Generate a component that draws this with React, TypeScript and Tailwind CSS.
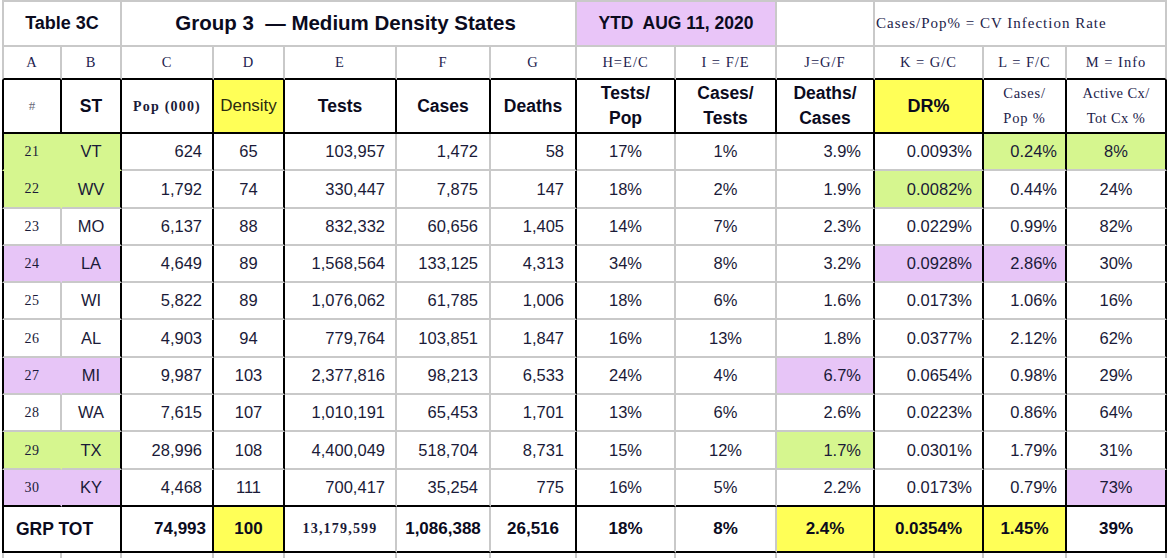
import React from "react";

// fill colours used in the sheet
const GREEN = { bg: "bg-[#d6f68f]", r: "border-r-[#d6f68f]", b: "border-b-[#d6f68f]" };
const PURPLE = { bg: "bg-[#e7c5f7]", r: "border-r-[#e7c5f7]", b: "border-b-[#e7c5f7]" };
type Fill = typeof GREEN;

const SERIF = "font-['Liberation_Serif','Times_New_Roman',serif]";

// column rules: black right border + alignment for the data rows
const cols = [
  { black: false, align: "justify-center" },
  { black: true, align: "justify-center" },
  { black: true, align: "justify-end pr-[10px]" },
  { black: true, align: "justify-center" },
  { black: false, align: "justify-end pr-[10px]" },
  { black: false, align: "justify-end pr-[11px]" },
  { black: true, align: "justify-end pr-[11px]" },
  { black: false, align: "justify-center" },
  { black: false, align: "justify-center" },
  { black: true, align: "justify-end pr-[12px]" },
  { black: true, align: "justify-end pr-[10px]" },
  { black: true, align: "justify-end pr-[8px]" },
  { black: true, align: "justify-center" },
];

const rows: { v: string[]; fill: Record<number, Fill> }[] = [
  { v: ["21", "VT", "624", "65", "103,957", "1,472", "58", "17%", "1%", "3.9%", "0.0093%", "0.24%", "8%"], fill: { 0: GREEN, 1: GREEN, 11: GREEN, 12: GREEN } },
  { v: ["22", "WV", "1,792", "74", "330,447", "7,875", "147", "18%", "2%", "1.9%", "0.0082%", "0.44%", "24%"], fill: { 0: GREEN, 1: GREEN, 10: GREEN } },
  { v: ["23", "MO", "6,137", "88", "832,332", "60,656", "1,405", "14%", "7%", "2.3%", "0.0229%", "0.99%", "82%"], fill: {} },
  { v: ["24", "LA", "4,649", "89", "1,568,564", "133,125", "4,313", "34%", "8%", "3.2%", "0.0928%", "2.86%", "30%"], fill: { 0: PURPLE, 1: PURPLE, 10: PURPLE, 11: PURPLE } },
  { v: ["25", "WI", "5,822", "89", "1,076,062", "61,785", "1,006", "18%", "6%", "1.6%", "0.0173%", "1.06%", "16%"], fill: {} },
  { v: ["26", "AL", "4,903", "94", "779,764", "103,851", "1,847", "16%", "13%", "1.8%", "0.0377%", "2.12%", "62%"], fill: {} },
  { v: ["27", "MI", "9,987", "103", "2,377,816", "98,213", "6,533", "24%", "4%", "6.7%", "0.0654%", "0.98%", "29%"], fill: { 0: PURPLE, 1: PURPLE, 9: PURPLE } },
  { v: ["28", "WA", "7,615", "107", "1,010,191", "65,453", "1,701", "13%", "6%", "2.6%", "0.0223%", "0.86%", "64%"], fill: {} },
  { v: ["29", "TX", "28,996", "108", "4,400,049", "518,704", "8,731", "15%", "12%", "1.7%", "0.0301%", "1.79%", "31%"], fill: { 0: GREEN, 1: GREEN, 9: GREEN } },
  { v: ["30", "KY", "4,468", "111", "700,417", "35,254", "775", "16%", "5%", "2.2%", "0.0173%", "0.79%", "73%"], fill: { 0: PURPLE, 1: PURPLE, 12: PURPLE } },
];

const letters = ["A", "B", "C", "D", "E", "F", "G", "H=E/C", "I = F/E", "J=G/F", "K = G/C", "L = F/C", "M = Info"];

function Two({ a, b }: { a: string; b: string }) {
  return (
    <div className="flex flex-col items-center leading-[25px]">
      <span>{a}</span>
      <span>{b}</span>
    </div>
  );
}

export default function App() {
  const head = "flex items-center justify-center border-r-2 border-b-2 border-r-black border-b-black";
  const bold = "font-bold text-[17.5px] text-[#0b0b1e]";

  return (
    <div className="h-[558px] w-[1172px] overflow-hidden bg-white pl-[2px] font-['Liberation_Sans',Arial,sans-serif] text-[#1a1a38]">
      <div className="grid grid-cols-[60px_60px_92px_71px_112px_94px_86px_99px_101px_98px_109px_83px_100px] grid-rows-[47px_33px_54px_repeat(10,37.3px)_46px_40px]">
        {/* title row */}
        <div className="col-span-2 flex items-center justify-center border-2 border-[#c9c9c9] text-[18px] font-bold text-[#0b0b1e]">Table 3C</div>
        <div className="col-span-5 flex items-center justify-center border-y-2 border-r-2 border-[#c9c9c9] pr-[6px] text-[20.5px] font-bold text-[#0b0b1e]">
          Group 3&nbsp; — Medium Density States
        </div>
        <div className="col-span-2 flex items-center justify-center border-y-2 border-r-2 border-[#c9c9c9] bg-[#e9c5f8] text-[17.5px] font-bold text-[#0b0b1e]">
          YTD&nbsp; AUG 11, 2020
        </div>
        <div className="border-y-2 border-r-2 border-[#c9c9c9]" />
        <div className={`col-span-3 flex items-center border-y-2 border-r-2 border-[#c9c9c9] pl-[1px] text-[15px] tracking-[1px] text-[#22224a] ${SERIF}`}>
          Cases/Pop% = CV Infection Rate
        </div>

        {/* column letters */}
        {letters.map((l, i) => (
          <div
            key={l}
            className={`flex items-end justify-center border-r-2 border-b-2 border-r-[#c9c9c9] border-b-black pb-[4px] text-[14.5px] tracking-[1px] text-[#22224e] ${SERIF} ${i === 0 ? "border-l-2 border-l-[#c9c9c9]" : ""}`}
          >
            {l}
          </div>
        ))}

        {/* header row */}
        <div className={`${head} border-l-2 border-l-black text-[13px] text-[#6a6a7a] ${SERIF}`}>#</div>
        <div className={`${head} ${bold}`}>ST</div>
        <div className={`${head} text-[14px] font-bold tracking-[1.2px] text-[#1a1a38] ${SERIF}`}>Pop (000)</div>
        <div className={`${head} bg-[#ffff57] text-[17px] text-[#2b2b10]`}>Density</div>
        <div className={`${head} ${bold}`}>Tests</div>
        <div className={`${head} ${bold}`}>Cases</div>
        <div className={`${head} ${bold}`}>Deaths</div>
        <div className={`${head} ${bold}`}><Two a="Tests/" b="Pop" /></div>
        <div className={`${head} ${bold}`}><Two a="Cases/" b="Tests" /></div>
        <div className={`${head} ${bold}`}><Two a="Deaths/" b="Cases" /></div>
        <div className={`${head} ${bold} bg-[#ffff57] text-[18px]`}>DR%</div>
        <div className={`${head} text-[14.5px] tracking-[0.8px] text-[#22224a] ${SERIF}`}><Two a="Cases/" b="Pop %" /></div>
        <div className={`${head} text-[14.5px] tracking-[0.4px] text-[#22224a] ${SERIF}`}><Two a="Active Cx/" b="Tot Cx %" /></div>

        {/* data rows */}
        {rows.map((row, ri) =>
          row.v.map((val, ci) => {
            const f = row.fill[ci];
            const c = cols[ci];
            const right = c.black ? "border-r-black" : f ? f.r : "border-r-[#c9c9c9]";
            const below = rows[ri + 1]?.fill[ci];
            const bottom =
              ri === rows.length - 1 ? "border-b-black" : f && below === f ? f.b : "border-b-[#c9c9c9]";
            return (
              <div
                key={`${ri}-${ci}`}
                className={`flex items-center border-r-2 border-b-2 ${right} ${bottom} ${f ? f.bg : ""} ${c.align} ${
                  ci === 0 ? `border-l-2 border-l-black text-[14px] tracking-[0.5px] ${SERIF}` : "text-[16.5px]"
                }`}
              >
                {val}
              </div>
            );
          })
        )}

        {/* group total */}
        <div className={`col-span-2 flex items-center border-x-2 border-b-2 border-black pl-[12px] ${bold}`}>GRP TOT</div>
        <div className={`${head} ${bold} justify-end pr-[6px] text-[17px]`}>74,993</div>
        <div className={`${head} ${bold} bg-[#ffff57] text-[17px]`}>100</div>
        <div className={`flex items-center justify-center border-r-2 border-b-2 border-r-[#c9c9c9] border-b-black text-[14px] font-bold tracking-[1.2px] text-[#1a1a38] ${SERIF}`}>
          13,179,599
        </div>
        <div className={`flex items-center justify-center border-r-2 border-b-2 border-r-[#c9c9c9] border-b-black ${bold} text-[17px]`}>1,086,388</div>
        <div className={`${head} ${bold} text-[17px]`}>26,516</div>
        <div className={`flex items-center justify-center border-r-2 border-b-2 border-r-[#c9c9c9] border-b-black ${bold} text-[17px]`}>18%</div>
        <div className={`flex items-center justify-center border-r-2 border-b-2 border-r-[#c9c9c9] border-b-black ${bold} text-[17px]`}>8%</div>
        <div className={`${head} ${bold} bg-[#ffff57] text-[17px]`}>2.4%</div>
        <div className={`${head} ${bold} bg-[#ffff57] text-[17px]`}>0.0354%</div>
        <div className={`${head} ${bold} bg-[#ffff57] text-[17px]`}>1.45%</div>
        <div className={`${head} ${bold} text-[17px]`}>39%</div>

        {/* next (cut off) row */}
        {letters.map((l, i) => (
          <div
            key={`x-${l}`}
            className={`border-r-2 border-b-2 border-[#c9c9c9] ${i === 0 ? "border-l-2" : ""}`}
          />
        ))}
      </div>
    </div>
  );
}
